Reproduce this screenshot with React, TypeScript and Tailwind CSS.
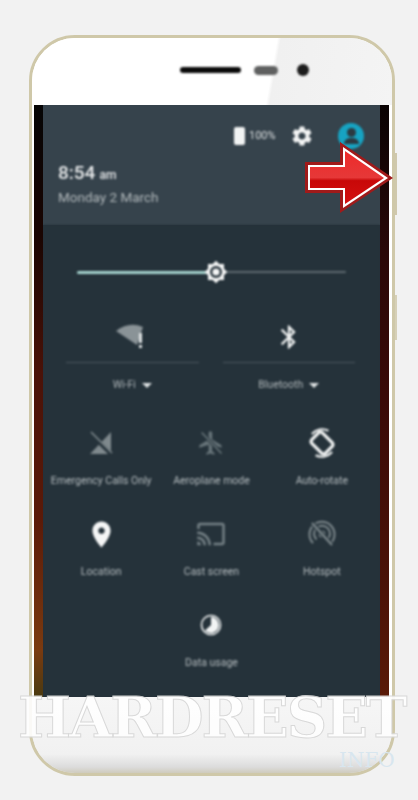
import React from "react";

const P = ({ d, size, className = "" }: { d: string; size: number; className?: string }) => (
  <svg width={size} height={size} viewBox="0 0 24 24" fill="currentColor" className={className}>
    <path d={d} />
  </svg>
);

const gear = "M19.14 12.94c.04-.3.06-.61.06-.94 0-.32-.02-.64-.07-.94l2.03-1.58c.18-.14.23-.41.12-.61l-1.92-3.32c-.12-.22-.37-.29-.59-.22l-2.39.96c-.5-.38-1.03-.7-1.62-.94l-.36-2.54c-.04-.24-.24-.41-.48-.41h-3.84c-.24 0-.43.17-.47.41l-.36 2.54c-.59.24-1.13.57-1.62.94l-2.39-.96c-.22-.08-.47 0-.59.22L2.74 8.87c-.12.21-.08.47.12.61l2.03 1.58c-.05.3-.09.63-.09.94s.02.64.07.94l-2.03 1.58c-.18.14-.23.41-.12.61l1.92 3.32c.12.22.37.29.59.22l2.39-.96c.5.38 1.03.7 1.62.94l.36 2.54c.05.24.24.41.48.41h3.84c.24 0 .44-.17.47-.41l.36-2.54c.59-.24 1.13-.56 1.62-.94l2.39.96c.22.08.47 0 .59-.22l1.92-3.32c.12-.22.07-.47-.12-.61l-2.01-1.58zM12 15.6c-1.98 0-3.6-1.62-3.6-3.6s1.62-3.6 3.6-3.6 3.6 1.62 3.6 3.6-1.62 3.6-3.6 3.6z";
const bt = "M17.71 7.71L12 2h-1v7.59L6.41 5 5 6.41 10.59 12 5 17.59 6.41 19 11 14.41V22h1l5.71-5.71-4.3-4.29 4.3-4.29zM13 5.83l1.88 1.88L13 9.59V5.83zm1.88 10.46L13 18.17v-3.76l1.88 1.88z";
const plane = "M21 16v-2l-8-5V3.5c0-.83-.67-1.5-1.5-1.5S10 2.67 10 3.5V9l-8 5v2l8-2.5V19l-2 1.5V22l3.5-1 3.5 1v-1.5L13 19v-5.5l8 2.5z";
const pin = "M12 2C8.13 2 5 5.13 5 9c0 5.25 7 13 7 13s7-7.75 7-13c0-3.87-3.13-7-7-7zm0 9.5c-1.38 0-2.5-1.12-2.5-2.5s1.12-2.5 2.5-2.5 2.5 1.12 2.5 2.5-1.12 2.5-2.5 2.5z";
const cast = "M21 3H3c-1.1 0-2 .9-2 2v3h2V5h18v14h-7v2h7c1.1 0 2-.9 2-2V5c0-1.1-.9-2-2-2zM1 18v3h3c0-1.66-1.34-3-3-3zm0-4v2c2.76 0 5 2.24 5 5h2c0-3.87-3.13-7-7-7zm0-4v2c4.97 0 9 4.03 9 9h2c0-6.08-4.93-11-11-11z";
const sun = "M20 8.69V4h-4.69L12 .69 8.69 4H4v4.69L.69 12 4 15.31V20h4.69L12 23.31 15.31 20H20v-4.69L23.31 12 20 8.69z";

const WifiIcon = () => (
  <svg width="34" height="30" viewBox="0 0 34 30" className="text-[#8a9397]">
    <path d="M1 9 Q 14 -1 28 5 L 22 23 Z" fill="currentColor" />
    <rect x="24" y="11" width="3" height="10" fill="#dfe3e4" />
    <rect x="24" y="23" width="3" height="3" fill="#dfe3e4" />
  </svg>
);

const SignalOff = () => (
  <svg width="28" height="28" viewBox="0 0 28 28" className="text-[#7f898d]">
    <path d="M24 3 V25 H3 Z" fill="currentColor" />
    <path d="M3 4 L25 26" stroke="#25323a" strokeWidth="4" />
    <path d="M4 3 L25 24" stroke="currentColor" strokeWidth="1.6" />
  </svg>
);

const PlaneOff = () => (
  <svg width="28" height="28" viewBox="0 0 24 24" className="text-[#68757a]">
    <path d={plane} fill="currentColor" />
    <path d="M4 3 L21 21" stroke="#25323a" strokeWidth="3" />
    <path d="M4 3 L21 21" stroke="currentColor" strokeWidth="1.4" />
  </svg>
);

const Rotate = () => (
  <svg width="32" height="32" viewBox="0 0 30 30" fill="none" stroke="#f2f4f4">
    <rect x="8" y="6" width="14" height="18" rx="2.5" strokeWidth="3" transform="rotate(-45 15 15)" />
    <path d="M5.5 6.5 A 13 13 0 0 1 21 3.5" strokeWidth="2" />
    <path d="M24.5 23.5 A 13 13 0 0 1 9 26.5" strokeWidth="2" />
  </svg>
);

const HotspotOff = () => (
  <svg width="28" height="28" viewBox="0 0 28 28" fill="none" stroke="#7d888c" strokeWidth="2">
    <circle cx="14" cy="14" r="2.5" />
    <path d="M8.5 19.5 A 8 8 0 1 1 19.5 19.5" />
    <path d="M5 23 A 12.5 12.5 0 1 1 23 23" />
    <path d="M4 3 L24 25" stroke="#25323a" strokeWidth="4.5" />
    <path d="M4 3 L24 25" strokeWidth="2.2" />
  </svg>
);

const DataUsage = () => (
  <svg width="22" height="22" viewBox="0 0 22 22">
    <circle cx="11" cy="11" r="9.5" fill="#25323a" stroke="#f2f4f4" strokeWidth="1.6" />
    <path d="M11 3 A 8 8 0 1 1 5 16.5 L 11 11 Z" fill="#f2f4f4" />
  </svg>
);

const Tile = ({ icon, label, className = "" }: { icon: React.ReactNode; label: string; className?: string }) => (
  <div className={`flex flex-col items-center ${className}`}>
    <div className="h-[30px] flex items-center justify-center">{icon}</div>
    <span className="mt-[16px] text-[10.5px] leading-[14px] text-[#b4bbbe] whitespace-nowrap">{label}</span>
  </div>
);

const Caret = () => <span className="w-0 h-0 border-x-[5px] border-x-transparent border-t-[5px] border-t-[#dfe3e4]" />;

export default function App() {
  return (
    <div className="relative w-[418px] h-[800px] overflow-hidden bg-[#f2f2f2] pt-[35px] pl-[29px] [font-family:Roboto,'Liberation_Sans',sans-serif]">
      <div className="absolute left-[394px] top-[153px] w-[3px] h-[62px] bg-[#cfc8ad]" />
      <div className="absolute left-[394px] top-[295px] w-[3px] h-[45px] bg-[#d6d0b8]" />

      <div className="relative w-[366px] h-[741px] rounded-[46px] border-[3px] border-[#cfc8a9] overflow-hidden bg-[linear-gradient(180deg,#ffffff_0%,#ffffff_90%,#e4e4e4_100%)] flex flex-col">
        {/* top bezel */}
        <div className="h-[67px] shrink-0 flex items-start justify-center pt-[28px] pl-[65px] gap-[13px] bg-[linear-gradient(100deg,#ffffff_0%,#ffffff_66%,#f0f0f0_67%,#f4f4f4_100%)]">
          <div className="w-[61px] h-[6px] mt-[1px] rounded-full bg-[#0a0a0a] blur-[0.8px]" />
          <div className="w-[24px] h-[9px] rounded-full bg-[#5f6060] blur-[0.8px]" />
          <div className="ml-[6px] w-[12px] h-[12px] -mt-[2px] rounded-full bg-[#1c1c1c] blur-[0.8px]" />
        </div>

        {/* screen */}
        <div className="h-[592px] shrink-0 ml-[2px] mr-[3px] flex bg-[#25323a]">
          <div className="w-[9px] bg-[linear-gradient(180deg,#050505_0%,#1a0502_22%,#4a1208_45%,#5b1a08_70%,#7a3a10_92%,#4a3a10_100%)]" />
          <div className="flex-1 flex flex-col overflow-hidden">
            {/* header */}
            <div className="h-[120px] bg-[#36434c] relative">
              <div className="flex items-center justify-end pt-[18px] pr-[16px] blur-[0.8px]">
                <div className="w-[11px] h-[18px] rounded-[2px] bg-[#f1f3f3] mr-[4px]" />
                <span className="text-[11px] leading-[18px] text-[#dde0e1] w-[29px]">100%</span>
                <P d={gear} size={24} className="text-[#f4f5f5] ml-[12px]" />
                <div className="ml-[24px] w-[26px] h-[26px] rounded-full bg-[#17a3c2] flex flex-col items-center justify-center">
                  <div className="w-[9px] h-[9px] rounded-full bg-[#2b3a42]" />
                  <div className="w-[15px] h-[6px] mt-[1px] rounded-t-full bg-[#2b3a42]" />
                </div>
              </div>
              <div className="absolute left-[15px] top-[56px] blur-[0.8px]">
                <div className="flex items-baseline gap-[4px] text-[#e8eaeb] font-medium">
                  <span className="text-[19px] leading-[24px]">8:54</span>
                  <span className="text-[12px] leading-[24px]">am</span>
                </div>
                <div className="text-[13.5px] leading-[20px] text-[#b0b7ba]">Monday 2 March</div>
              </div>
            </div>

            {/* body */}
            <div className="flex-1 bg-[#25323a] flex flex-col blur-[0.8px]">
              {/* slider */}
              <div className="mt-[35px] mx-[34px] h-[24px] relative flex items-center">
                <div className="h-[3px] w-[139px] bg-[#a6d4cf] rounded-l-full" />
                <div className="h-[2px] flex-1 bg-[#5d696f] rounded-r-full" />
                <svg className="absolute left-[127px] top-0" width="24" height="24" viewBox="0 0 24 24">
                  <path d={sun} fill="#f5f6f6" />
                  <circle cx="12" cy="12" r="6" fill="#25323a" />
                  <circle cx="12" cy="12" r="3.6" fill="#f5f6f6" />
                </svg>
              </div>

              {/* big tiles */}
              <div className="mt-[38px] grid grid-cols-2 gap-x-[24px] pl-[23px] pr-[25px]">
                <div className="flex flex-col items-center">
                  <div className="h-[30px] flex items-center"><WifiIcon /></div>
                  <div className="mt-[10px] w-full h-[1px] bg-[#4b575d]" />
                  <div className="mt-[15px] flex items-center gap-[6px] text-[10.5px] leading-[14px] text-[#adb4b7]">Wi-Fi <Caret /></div>
                </div>
                <div className="flex flex-col items-center">
                  <div className="h-[30px] flex items-center"><P d={bt} size={28} className="text-[#eef0f0]" /></div>
                  <div className="mt-[10px] w-full h-[1px] bg-[#4b575d]" />
                  <div className="mt-[15px] flex items-center gap-[6px] text-[10.5px] leading-[14px] text-[#adb4b7]">Bluetooth <Caret /></div>
                </div>
              </div>

              {/* small tiles */}
              <div className="mt-[36px] grid grid-cols-3 gap-y-[31px] px-[3px]">
                <Tile icon={<SignalOff />} label="Emergency Calls Only" />
                <Tile icon={<PlaneOff />} label="Aeroplane mode" />
                <Tile icon={<Rotate />} label="Auto-rotate" />
                <Tile icon={<P d={pin} size={31} className="text-[#f5f6f6]" />} label="Location" />
                <Tile icon={<P d={cast} size={30} className="text-[#748085]" />} label="Cast screen" />
                <Tile icon={<HotspotOff />} label="Hotspot" />
                <Tile icon={<DataUsage />} label="Data usage" className="col-start-2" />
              </div>
            </div>
          </div>
          <div className="w-[9px] bg-[linear-gradient(180deg,#0a0303_0%,#2a0808_25%,#3a0a08_50%,#4a1208_80%,#5a1a08_100%)]" />
        </div>

        <div className="flex-1 bg-[linear-gradient(180deg,#f6f6f6_0%,#f1f1f1_75%,#dcdcdc_92%,#cfcbbd_100%)]" />
      </div>

      {/* arrow */}
      <svg className="absolute left-[300px] top-[138px]" width="98" height="80" viewBox="0 0 98 80">
        <defs>
          <linearGradient id="red" x1="0" y1="0" x2="0" y2="1">
            <stop offset="0" stopColor="#ee2a2a" />
            <stop offset="0.5" stopColor="#e63838" />
            <stop offset="0.56" stopColor="#c80808" />
            <stop offset="1" stopColor="#d41010" />
          </linearGradient>
        </defs>
        <path d="M5 24 H40 V4 L93 40 L40 75 V55 H5 Z" fill="#a01a1a" />
        <path d="M8 27 H43 V9 L88 40 L43 70 V52 H8 Z" fill="#ffffff" />
        <path d="M10 29 H45 V13 L84 40 L45 66 V50 H10 Z" fill="url(#red)" />
      </svg>

      {/* watermark */}
      <div className="absolute left-[18px] top-[692px] text-[56px] leading-[50px] tracking-[-2px] font-bold text-[#ffffff] whitespace-nowrap [font-family:'DejaVu_Serif',serif] [-webkit-text-stroke:1px_#d6d6d6] opacity-90">
        HARDRESET
      </div>
      <div className="absolute left-[339px] top-[749px] text-[20px] leading-[22px] text-[#d8e6ef] [font-family:'DejaVu_Serif',serif]">
        INFO
      </div>
    </div>
  );
}
